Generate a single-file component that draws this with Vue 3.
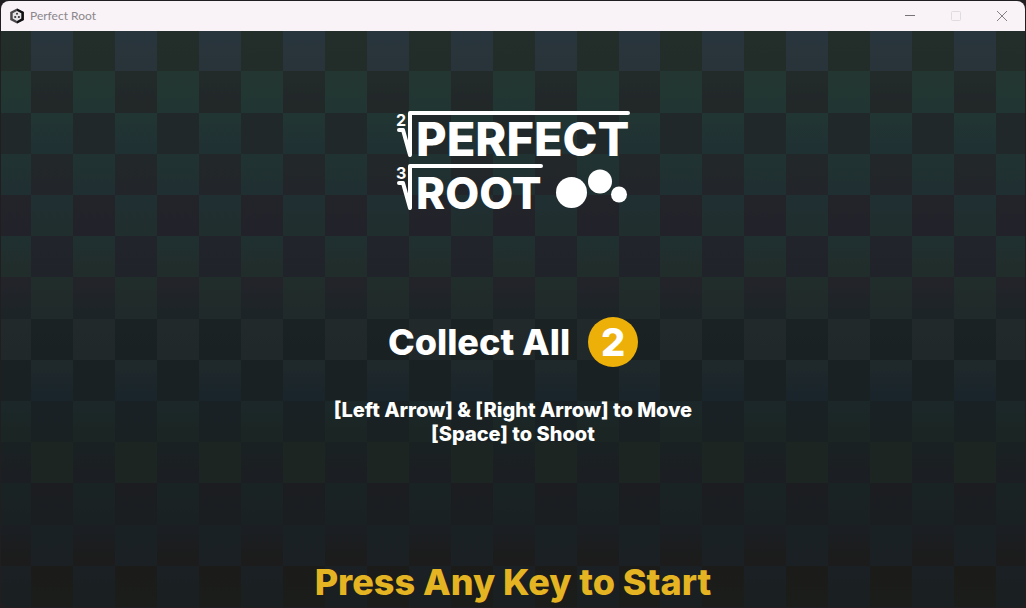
<script setup>
const rows = [
  { light: ['#29353c', '#29343a'], dark: ['#232e2b', '#222c28'] },
  { light: ['#233632', '#213632'], dark: ['#222a2a', '#222728'] },
  { light: ['#213533', '#203133'], dark: ['#212829', '#21282a'] },
  { light: ['#213232', '#203032'], dark: ['#222729', '#22262a'] },
  { light: ['#202f32', '#212e2e'], dark: ['#22242a', '#22232a'] },
  { light: ['#202f30', '#212d2a'], dark: ['#21242b', '#21232a'] },
  { light: ['#212d2a', '#212a2a'], dark: ['#22242a', '#1d2427'] },
  { light: ['#22292b', '#21282a'], dark: ['#1b2224', '#1a2122'] },
  { light: ['#1f282b', '#1a252b'], dark: ['#1a2123', '#1a2122'] },
  { light: ['#1b2728', '#1b2523'], dark: ['#1a2124', '#1a2123'] },
  { light: ['#1c2522', '#1c2521'], dark: ['#1a2123', '#1b1e22'] },
  { light: ['#1a2324', '#1a2123'], dark: ['#1b1d21', '#1a1e21'] },
  { light: ['#1a2124', '#1a2023'], dark: ['#1b1e22', '#1b1c1b'] },
  { light: ['#1a2023', '#1a1f21'], dark: ['#1b1c1a', '#1b1d1b'] },
]
const columns = 25
const shade = (r, c) => ((r + c) % 2 ? 'light' : 'dark')
</script>

<template>
  <div class="desktop">
    <main class="window">
      <header class="titlebar">
        <svg class="app-icon" viewBox="0 0 16 16" aria-hidden="true">
          <path d="M8 0.5 14.8 4v8L8 15.5 1.2 12V4Z" fill="#4a474b" />
          <path d="M8 0.5 14.8 4v8L8 15.5Z" fill="#111012" />
          <path d="M8 3 12.3 5.3v5.2L8 13 3.7 10.5V5.3Z" fill="#e6e3e6" />
          <circle cx="8" cy="5.8" r="1" fill="#353336" />
          <circle cx="6.2" cy="9" r="1.1" fill="#353336" />
          <circle cx="9.900" cy="9" r="1.1" fill="#353336" />
        </svg>
        <span class="caption">Perfect Root</span>
        <button class="control" type="button" aria-label="Minimize">
          <svg viewBox="0 0 12 12"><path d="M1 5.5h10" stroke="#777478" /></svg>
        </button>
        <button class="control" type="button" aria-label="Maximize" disabled>
          <svg viewBox="0 0 12 12"><rect x="1.5" y="1.5" width="9" height="9" rx="1" fill="none" stroke="#dfdbdf" /></svg>
        </button>
        <button class="control" type="button" aria-label="Close">
          <svg viewBox="0 0 12 12"><path d="m1 1 10 10M11 1 1 11" stroke="#858286" /></svg>
        </button>
      </header>

      <section class="scene">
        <svg class="board" viewBox="28 2 2441 1398" preserveAspectRatio="none" shape-rendering="crispEdges" aria-hidden="true">
          <defs>
            <template v-for="(row, r) in rows" :key="r">
              <linearGradient v-for="tone in ['light', 'dark']" :id="`${tone}-${r}`" :key="tone" x1="0" y1="0" x2="0" y2="1">
                <stop offset="0.2" :stop-color="row[tone][0]" />
                <stop offset="0.8" :stop-color="row[tone][1]" />
              </linearGradient>
            </template>
          </defs>
          <template v-for="(row, r) in rows" :key="r">
            <rect v-for="c in columns" :key="c" :x="(c - 1) * 100" :y="r * 100" width="101" height="101" :fill="`url(#${shade(r, c - 1)}-${r})`" />
          </template>
        </svg>

        <h1 class="logo">
          <svg viewBox="-1 0 236 102" role="img" aria-label="Perfect Root">
            <g fill="none" stroke="#fff" stroke-width="4" stroke-linecap="round" stroke-linejoin="round">
              <path d="M3 20h4l7 25V3h218" />
              <path d="M3 73h4l7 25V56h131" />
            </g>
            <g class="word">
              <text class="upper" x="20" y="46">PERFECT</text>
              <text class="lower" x="20" y="99">ROOT</text>
            </g>
            <g class="index">
              <text x="0" y="16">2</text>
              <text x="0" y="69">3</text>
            </g>
            <g fill="#fff">
              <circle cx="175.500" cy="82.500" r="15.500" />
              <circle cx="204" cy="71.500" r="12" />
              <circle cx="223" cy="84.500" r="8" />
            </g>
          </svg>
        </h1>

        <p class="goal">Collect All <span class="coin">2</span></p>
        <p class="help">[Left Arrow] &amp; [Right Arrow] to Move<br />[Space] to Shoot</p>
        <button class="start" type="button">Press Any Key to Start</button>
      </section>
    </main>
  </div>
</template>

<style scoped>
.desktop {
  box-sizing: border-box;
  display: flex;
  min-height: 100vh;
  padding: 1px;
  background: #211e22;
}
.window {
  display: flex;
  flex: 1;
  flex-direction: column;
  overflow: hidden;
  border-radius: 8px;
  background: #1a1f21;
}
.titlebar {
  display: flex;
  align-items: center;
  height: 30px;
  padding-left: 8px;
  background: #f9f3f8;
}
.app-icon {
  width: 16px;
  height: 16px;
}
.caption {
  flex: 1;
  margin-left: 5px;
  font: 12px/16px Lato, "Open Sans", sans-serif;
  color: #8b878b;
}
.control {
  display: grid;
  place-items: center;
  width: 46px;
  height: 30px;
  padding: 0;
  border: 0;
  background: none;
}
.control svg {
  width: 12px;
  height: 12px;
}
.scene {
  position: relative;
  display: flex;
  flex: 1;
  flex-direction: column;
  align-items: center;
  color: #fff;
  font-family: Inter, Roboto, sans-serif;
  font-weight: 800;
}
.board {
  position: absolute;
  inset: 0;
  width: 100%;
  height: 100%;
}
.logo,
.goal,
.help,
.start {
  position: relative;
  margin: 0;
}
.logo {
  width: 236px;
  margin-top: 79px;
}
.logo svg {
  display: block;
  overflow: visible;
}
.logo text {
  fill: #fff;
  font-family: Inter, Roboto, sans-serif;
}
.word text {
  font-weight: 800;
}
.word .upper {
  font-size: 47px;
}
.word .lower {
  font-size: 44px;
}
.index text {
  font-size: 16px;
  font-weight: 700;
}
.goal {
  display: flex;
  align-items: center;
  gap: 18px;
  margin-top: 105px;
  font-size: 36px;
  line-height: 50px;
}
.coin {
  width: 50px;
  height: 50px;
  border-radius: 50%;
  background: #edb009;
  font-size: 38px;
  text-align: center;
}
.help {
  margin-top: 31px;
  font-size: 20px;
  line-height: 24px;
  text-align: center;
}
.start {
  margin-top: auto;
  padding: 0;
  border: 0;
  background: none;
  color: #e4b422;
  font: inherit;
  font-size: 36px;
  line-height: 50px;
}
</style>

<style>
body {
  background: #211e22;
}
</style>
